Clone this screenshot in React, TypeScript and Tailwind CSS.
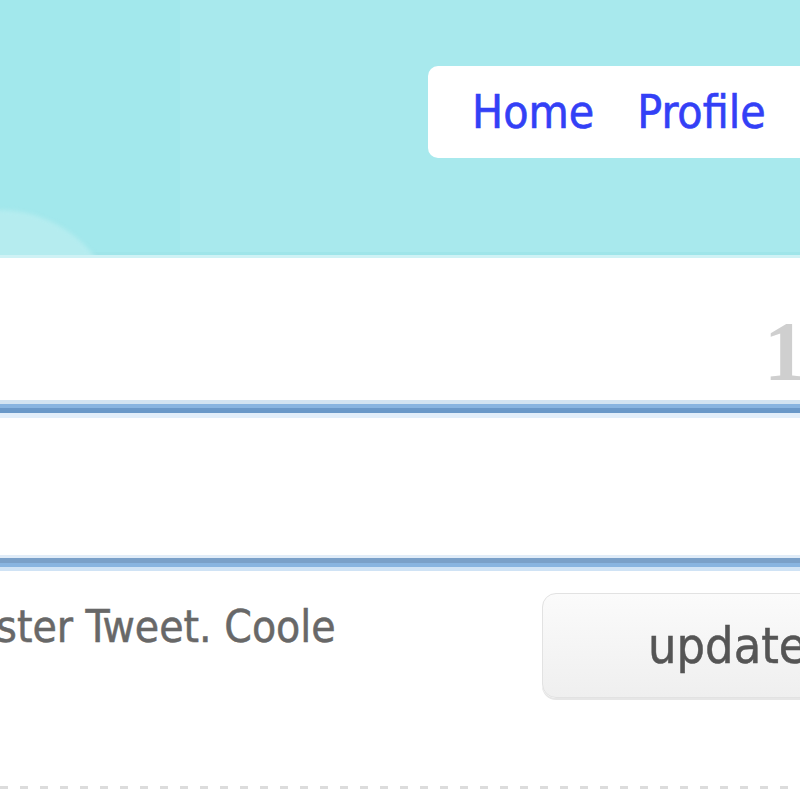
import React from "react";

const App = () => {
  return (
    <div className="w-[800px] h-[800px] overflow-hidden bg-white font-['DejaVu_Sans_Condensed','DejaVu_Sans',sans-serif] [font-stretch:condensed]">
      {/* header */}
      <div className="relative h-[258px] overflow-hidden border-b-[3px] border-[#cff2f5] bg-[linear-gradient(90deg,#a2e8ec_0,#a2e8ec_180px,#a8e9ed_180px)] shadow-[inset_0_-3px_0_#9fe5e9]">
        <div className="absolute left-[-120px] top-[210px] w-[240px] h-[240px] rounded-full bg-[#b5ecef] blur-[2px]"></div>
        <div className="flex pt-[66px] pl-[428px]">
          <div className="w-[420px] h-[92px] shrink-0 rounded-[10px] bg-white flex items-center gap-[43px] pl-[44px] text-[46px] leading-none text-[#3340f6] [-webkit-text-stroke:0.6px_#3340f6]">
            <a>Home</a>
            <a>Profile</a>
          </div>
        </div>
      </div>

      {/* counter */}
      <div className="h-[146px] pt-[52px] pl-[764px] whitespace-nowrap">
        <span className="font-['Liberation_Serif',serif] [font-stretch:normal] font-bold text-[84px] leading-none text-[#cfcfcf]">
          140
        </span>
      </div>

      <textarea
        className="block w-full h-[163px] resize-none outline-none bg-white border-t-4 border-b-4 border-t-[#88b4e0] border-b-[#88b4e0] shadow-[0_-4px_0_#d2e3f1,0_4px_0_#d0e3f5,inset_0_5px_0_#6a98c8,inset_0_10px_0_#e2eefa,inset_0_-5px_0_#7aa0c8,inset_0_-8px_0_#e0ecf8]"
      ></textarea>

      {/* tweet row */}
      <div className="flex items-start pt-[26px]">
        <div className="w-[542px] shrink-0 overflow-hidden">
          <p className="mt-[12px] -ml-[45px] whitespace-nowrap text-[44px] leading-none text-[#686868] [-webkit-text-stroke:0.5px_#686868]">
            Erster Tweet. Coole
          </p>
        </div>
        <button className="w-[300px] h-[105px] shrink-0 flex items-center pl-[105px] rounded-[14px] border border-[#e2e2e2] bg-gradient-to-b from-[#fbfbfb] to-[#efefef] shadow-[0_2px_0_#e6e6e6] text-[50px] leading-none text-[#555] [-webkit-text-stroke:0.5px_#555]">
          update
        </button>
      </div>

      <div className="mt-[88px] h-[3px] bg-[repeating-linear-gradient(90deg,#dcdcdc_0,#dcdcdc_8px,transparent_8px,transparent_20px)]"></div>
    </div>
  );
};

export default App;
